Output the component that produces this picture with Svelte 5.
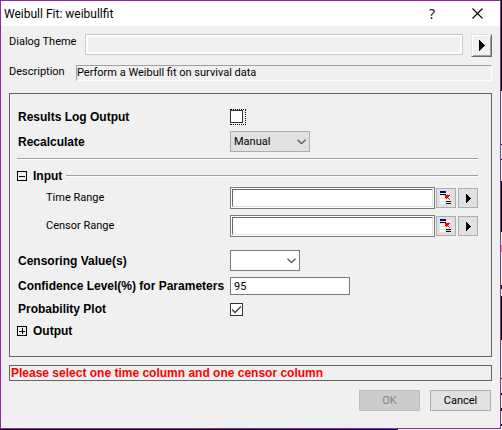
<script>
  let resultsLog = $state(false);
  let recalculate = $state('Manual');
  let timeRange = $state('');
  let censorRange = $state('');
  let censoring = $state('');
  let confidence = $state('95');
  let plot = $state(true);
  let inputOpen = $state(true);
  let outputOpen = $state(false);
</script>

{#snippet toggle(open)}
  <svg width="10" height="10" viewBox="0 0 10 10" shape-rendering="crispEdges" aria-hidden="true">
    <path d="M0 0h10v10H0zM1 1v8h8V1z" fill="#000" fill-rule="evenodd" />
    <path d="M2 5h6v1H2z" fill="#000" />
    {#if !open}<path d="M5 2h1v6H5z" fill="#000" />{/if}
  </svg>
{/snippet}

{#snippet arrow()}
  <svg width="5" height="9" viewBox="0 0 5 9" shape-rendering="crispEdges" aria-hidden="true">
    <path d="M0 0h1v1h1v1h1v1h1v1h1v1h-1v1h-1v1h-1v1h-1v1h-1z" />
  </svg>
{/snippet}

{#snippet chevron()}
  <svg class="chevron" width="9" height="6" viewBox="0 0 9 6" aria-hidden="true">
    <path d="M.5 .8 4.5 4.6 8.5 .8" fill="none" stroke="#555" stroke-width="1.3" />
  </svg>
{/snippet}

{#snippet picker()}
  <svg width="12" height="14" viewBox="0 0 12 14" shape-rendering="crispEdges" aria-hidden="true">
    <path d="M6 1h5v2H6zM0 5h5v2H0zM0 8h5v2H0zM6 8h5v2H6zM0 11h5v2H0z" fill="#fff" />
    <path d="M0 0h6v2H0z" fill="#000080" />
    <path d="M0 3h6v1H0zM6 10h5v1H6zM6 12h5v1H6z" fill="#000" />
    <path d="M5 4h5v1H9v1H8v1h1v1h1v1H9V8H8V7H7v1H6V7H5z" fill="#f00" />
  </svg>
{/snippet}

<div class="desktop">
  <form class="dialog" onsubmit={(e) => e.preventDefault()}>
    <header>
      <h1>Weibull Fit: weibullfit</h1>
      <button type="button" class="caption help" aria-label="Help">?</button>
      <button type="button" class="caption" aria-label="Close">
        <svg width="11" height="11" viewBox="0 0 11 11" aria-hidden="true">
          <path d="M.5 .5l10 10M10.5 .5l-10 10" stroke="#000" stroke-width="1.1" />
        </svg>
      </button>
    </header>

    <div class="theme">
      <label for="theme">Dialog Theme</label>
      <input id="theme" readonly />
      <button type="button" class="raised" aria-label="Theme menu">
        <svg width="6" height="11" viewBox="0 0 6 11" shape-rendering="crispEdges" aria-hidden="true">
          <path d="M0 0h1v1h1v1h1v1h1v1h1v1h1v1h-1v1h-1v1h-1v1h-1v1h-1v1h-1z" />
        </svg>
      </button>
    </div>

    <div class="description">
      <span>Description</span>
      <output>Perform a Weibull fit on survival data</output>
    </div>

    <main>
      <div class="row">
        <label for="log">Results Log Output</label>
        <span class="focus"><input id="log" type="checkbox" bind:checked={resultsLog} /></span>
      </div>
      <div class="row">
        <label for="recalc">Recalculate</label>
        <span class="combo manual">
          <select id="recalc" bind:value={recalculate}>
            <option>Manual</option><option>Auto</option><option>None</option>
          </select>
          {@render chevron()}
        </span>
      </div>
      <hr />
      <div class="branch">
        <button type="button" aria-expanded={inputOpen} onclick={() => (inputOpen = !inputOpen)}>
          {@render toggle(inputOpen)}Input
        </button>
        <hr />
      </div>
      {#if inputOpen}
        <div class="row range">
          <label for="time">Time Range</label>
          <div class="pick">
            <span class="sunken"><input id="time" bind:value={timeRange} /></span>
            <button type="button" aria-label="Select time range">{@render picker()}</button>
            <button type="button" aria-label="Time range menu">{@render arrow()}</button>
          </div>
        </div>
        <div class="row range">
          <label for="censor">Censor Range</label>
          <div class="pick">
            <span class="sunken"><input id="censor" bind:value={censorRange} /></span>
            <button type="button" aria-label="Select censor range">{@render picker()}</button>
            <button type="button" aria-label="Censor range menu">{@render arrow()}</button>
          </div>
        </div>
      {/if}
      <div class="row censoring">
        <label for="values">Censoring Value(s)</label>
        <span class="combo values">
          <select id="values" bind:value={censoring}>
            <option value=""></option><option>0</option><option>1</option>
          </select>
          {@render chevron()}
        </span>
      </div>
      <div class="row">
        <label for="level">Confidence Level(%) for Parameters</label>
        <input id="level" class="level" bind:value={confidence} />
      </div>
      <div class="row">
        <label for="plot">Probability Plot</label>
        <input id="plot" type="checkbox" bind:checked={plot} />
      </div>
      <div class="branch output">
        <button type="button" aria-expanded={outputOpen} onclick={() => (outputOpen = !outputOpen)}>
          {@render toggle(outputOpen)}Output
        </button>
      </div>
    </main>

    <p class="message" role="alert">Please select one time column and one censor column</p>

    <footer>
      <button type="submit" disabled>OK</button>
      <button type="button">Cancel</button>
    </footer>
  </form>
  <div class="edge"></div>
</div>

<style>
  :global(body) {
    background: linear-gradient(90deg, #05000c 0 180px, #00007a 398px, #fff 398px);
  }
  * {
    box-sizing: border-box;
  }
  .desktop {
    display: flex;
    font: 11px/16px Roboto, 'Liberation Sans', Arial, sans-serif;
    color: #000;
  }
  .edge {
    width: 1px;
    background: linear-gradient(
      #000 0 91px, #fff 91px 144px, #000080 144px 145px, #fff 145px 159px, #000 159px 160px,
      #fff 160px 181px, #000 181px 232px, #fff 232px 245px, #e88 245px 252px, #fff 252px 285px,
      #000 285px 289px, #fff 289px 296px, #000 296px 340px, #fff 340px 378px, #400020 378px 379px,
      #fff 379px 393px, #400020 393px 395px, #fff 395px 408px, #000 408px 411px, #fff 411px 424px,
      #000080 424px 426px, #fff 426px
    );
  }
  .dialog {
    flex: 1;
    min-width: 0;
    background: #f0f0f0;
    border: 1px solid #9128a0;
    padding-bottom: 17px;
  }
  input,
  button,
  select {
    font: inherit;
    color: inherit;
    margin: 0;
    border-radius: 0;
    outline: 0;
    min-width: 0;
  }
  button {
    display: flex;
    align-items: center;
    justify-content: center;
    padding: 0;
    background: #e1e1e1;
    border: 1px solid #adadad;
  }
  header {
    display: flex;
    align-items: center;
    height: 25px;
    padding-right: 8px;
    background: #fff;
  }
  h1 {
    flex: 1;
    margin: 0;
    padding-left: 3px;
    font: 12px/24px Roboto, 'Open Sans', sans-serif;
  }
  .caption {
    width: 30px;
    height: 24px;
    background: none;
    border: 0;
  }
  .help {
    margin-right: 15px;
    font: 14px/24px 'Open Sans', 'Noto Sans', sans-serif;
  }
  .theme {
    display: flex;
    align-items: flex-start;
    padding: 8px 8px 0;
  }
  .theme label {
    width: 76px;
  }
  .theme input {
    flex: 1;
    height: 21px;
    padding: 0 4px;
    background: #f0f0f0;
    border: 1px solid #c8c8c8;
    box-shadow: inset 0 0 0 2px #fff;
  }
  .raised {
    width: 21px;
    height: 23px;
    margin-left: 8px;
    background: #f0f0f0;
    border: 1px solid;
    border-color: #e3e3e3 #696969 #696969 #e3e3e3;
    box-shadow: inset 1px 1px #fff, inset -1px -1px #a0a0a0;
  }
  .description {
    display: flex;
    padding: 8px 8px 0;
  }
  .description span {
    width: 67px;
    line-height: 14px;
  }
  .description output {
    flex: 1;
    border: 1px solid;
    border-color: #a0a0a0 #fff #fff #a0a0a0;
    line-height: 14px;
  }
  main {
    margin: 12px 8px 0;
    padding: 15px 13px 17px 7px;
    border: 1px solid #646464;
  }
  .row {
    display: grid;
    grid-template-columns: 213px minmax(0, 1fr);
    align-items: center;
    margin-bottom: 6px;
    font: bold 12px/16px 'Liberation Sans', Arial, sans-serif;
  }
  .row > label {
    padding-left: 1px;
  }
  .row input,
  .row select {
    font: 11px/16px Roboto, 'Liberation Sans', Arial, sans-serif;
  }
  .focus {
    display: flex;
    align-items: flex-start;
    width: 16px;
    height: 16px;
    border: 1px dotted #000;
    border-left: 0;
  }
  input[type='checkbox'] {
    appearance: none;
    width: 13px;
    height: 13px;
    background: #fff;
    border: 1px solid #333;
  }
  input[type='checkbox']:checked {
    background: #fff url("data:image/svg+xml,%3Csvg xmlns='http://www.w3.org/2000/svg' viewBox='0 0 11 11'%3E%3Cpath d='M1 5.5 4 8.5 10 2.5' fill='none' stroke='%23444' stroke-width='1.4'/%3E%3C/svg%3E");
  }
  .combo {
    position: relative;
    height: 21px;
  }
  .combo select {
    appearance: none;
    display: block;
    width: 100%;
    height: 100%;
    padding: 0 3px;
    background: #e1e1e1;
    border: 1px solid #adadad;
  }
  .chevron {
    position: absolute;
    right: 4px;
    top: 8px;
    pointer-events: none;
  }
  .manual {
    width: 80px;
  }
  .values {
    width: 70px;
  }
  .combo.values select {
    background: #fff;
    border-color: #7a7a7a;
  }
  hr {
    height: 2px;
    margin: 0;
    border: 0;
    background: linear-gradient(#a0a0a0 50%, #fff 50%);
  }
  .branch {
    display: flex;
    align-items: center;
    gap: 4px;
    margin: 8px 0 3px;
  }
  .branch button {
    gap: 6px;
    background: none;
    border: 0;
    font: bold 12px/16px 'Liberation Sans', Arial, sans-serif;
  }
  .branch hr {
    flex: 1;
  }
  .branch.output {
    margin: 0;
  }
  .row.range {
    font: 11px/16px Roboto, 'Liberation Sans', Arial, sans-serif;
  }
  .range > label {
    padding-left: 29px;
  }
  .pick {
    display: flex;
    align-items: center;
  }
  .sunken {
    flex: 1;
    height: 22px;
    padding: 1px;
    background: #fff;
    border: 1px solid #7a7a7a;
  }
  .sunken input {
    display: block;
    width: 100%;
    height: 18px;
    padding: 0 3px;
    background: #fff;
    border: 1px solid;
    border-color: #696969 #e3e3e3 #e3e3e3 #696969;
  }
  .pick button {
    width: 20px;
    height: 20px;
    margin-left: 1px;
  }
  .pick button:last-child {
    margin-left: 2px;
  }
  .censoring {
    margin-top: 13px;
  }
  .level {
    width: 120px;
    height: 18px;
    padding: 0 3px;
    background: #fff;
    border: 1px solid #7a7a7a;
  }
  .message {
    margin: 8px 8px 0;
    padding-left: 1px;
    border: 1px solid #646464;
    font: bold 12px/14px 'Liberation Sans', Arial, sans-serif;
    color: #f00;
  }
  footer {
    display: flex;
    justify-content: flex-end;
    gap: 10px;
    padding: 9px 9px 0 0;
  }
  footer button {
    width: 61px;
    height: 21px;
  }
  footer button:disabled {
    color: #838383;
    background: #ccc;
    border-color: #bfbfbf;
  }
</style>
